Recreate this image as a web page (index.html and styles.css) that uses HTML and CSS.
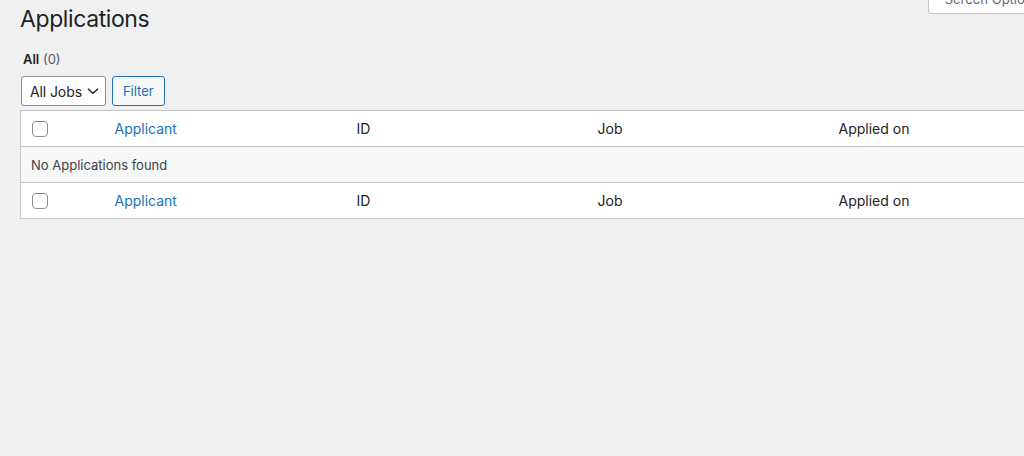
FILE: index.html
```html
<!DOCTYPE html>
<html lang="en">
<head>
  <meta charset="UTF-8" />
  <title>Applications</title>
  <link rel="stylesheet" href="styles.css">
</head>
<body>
  <div class="wrap">
    <button class="screen-options">Screen Options <span class="arrow">&#9662;</span></button>
    <h1>Applications</h1>

    <ul class="subsubsub">
      <li><strong>All</strong> <span class="count">(0)</span></li>
    </ul>

    <div class="tablenav">
      <div class="select">
        <span>All Jobs</span>
        <svg width="12" height="8" viewBox="0 0 12 8"><path d="M1 1.8l5 4.4 5-4.4" fill="none" stroke="#1d2327" stroke-width="1.4"/></svg>
      </div>
      <button class="filter">Filter</button>
    </div>

    <table class="widefat">
      <colgroup>
        <col class="col-check">
        <col class="col">
        <col class="col">
        <col class="col">
        <col class="col">
      </colgroup>
      <thead>
        <tr>
          <td class="check"><span class="box"></span></td>
          <th><a href="#">Applicant</a></th>
          <th>ID</th>
          <th>Job</th>
          <th>Applied on</th>
        </tr>
      </thead>
      <tbody>
        <tr class="empty">
          <td colspan="5">No Applications found</td>
        </tr>
      </tbody>
      <tfoot>
        <tr>
          <td class="check"><span class="box"></span></td>
          <th><a href="#">Applicant</a></th>
          <th>ID</th>
          <th>Job</th>
          <th>Applied on</th>
        </tr>
      </tfoot>
    </table>
  </div>
</body>
</html>
```

FILE: styles.css
```css
:root {
  --bg: #f0f0f1;
  --text: #1d2327;
  --muted: #50575e;
  --border: #c3c4c7;
  --link: #2271b1;
  --stripe: #f6f7f7;
}

* {
  box-sizing: border-box;
}

body {
  margin: 0;
  background-color: var(--bg);
  color: var(--text);
  font-family: Inter, "Noto Sans", sans-serif;
  font-size: 13px;
  overflow: hidden;
}

.wrap {
  padding-left: 20px;
}

.screen-options {
  float: right;
  margin-top: -16px;
  margin-right: -43px;
  height: 30px;
  padding: 0 16px;
  background: #fff;
  border: 1px solid var(--border);
  border-top: none;
  border-radius: 0 0 4px 4px;
  color: #646970;
  font-family: inherit;
  font-size: 13px;
  white-space: nowrap;
}

h1 {
  margin: 0;
  padding: 5px 0 0;
  font-size: 23px;
  font-weight: 400;
  line-height: 1.3;
  letter-spacing: -0.4px;
}

.subsubsub {
  list-style: none;
  margin: 15px 0 0 3px;
  padding: 0;
  font-size: 13px;
  line-height: 1.5;
}

.subsubsub strong {
  font-weight: 600;
}

.count {
  color: var(--muted);
}

.tablenav {
  display: flex;
  gap: 6px;
  margin: 7px 0 4px 1px;
  height: 30px;
}

.select {
  display: flex;
  align-items: center;
  gap: 5px;
  padding: 0 6px 0 8px;
  background: #fff;
  border: 1px solid #8c8f94;
  border-radius: 3px;
  font-size: 14px;
  letter-spacing: -0.1px;
  white-space: nowrap;
}

.select svg {
  flex-shrink: 0;
}

.filter {
  padding: 0 10px;
  background: var(--stripe);
  border: 1px solid var(--link);
  border-radius: 3px;
  color: var(--link);
  font-family: inherit;
  font-size: 13px;
}

.widefat {
  width: 1048px;
  table-layout: fixed;
  border-collapse: collapse;
  background: #fff;
  border: 1px solid var(--border);
}

.col-check {
  width: 84px;
}

.col {
  width: 241px;
}

.widefat th,
.widefat td {
  height: 36px;
  padding: 0 10px;
  text-align: left;
  font-weight: 400;
  font-size: 14px;
  vertical-align: middle;
}

.widefat th {
  padding-left: 11px;
}

.widefat thead tr {
  border-bottom: 1px solid var(--border);
}

.widefat tfoot tr {
  border-top: 1px solid var(--border);
}

.widefat a {
  color: var(--link);
  text-decoration: none;
}

.widefat th:first-of-type {
  padding-left: 10px;
}

.widefat td.check {
  padding-left: 11px;
}

.box {
  display: block;
  width: 16px;
  height: 16px;
  border: 1px solid #8c8f94;
  border-radius: 4px;
  background: #fff;
}

.empty td {
  background: var(--stripe);
  font-size: 13px;
  color: #3c434a;
}
```
